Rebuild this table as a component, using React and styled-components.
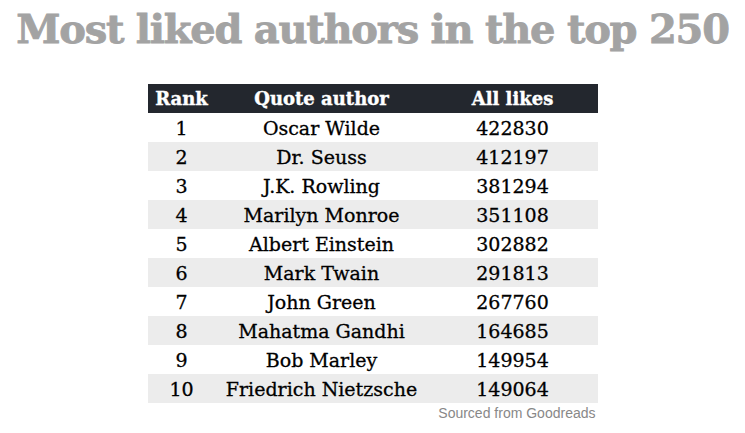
import React from "react";
import styled, { createGlobalStyle } from "styled-components";

const Global = createGlobalStyle`
  html, body { margin: 0; padding: 0; background: #ffffff; }
  body { width: 745px; height: 433px; overflow: hidden; }
`;

const Page = styled.div`
  display: flex;
  flex-direction: column;
  align-items: center;
  padding-top: 5px;
`;

const Title = styled.h1`
  margin: 0;
  font-family: "DejaVu Serif", serif;
  font-weight: bold;
  font-size: 40px;
  line-height: 48px;
  color: #a3a3a3;
  -webkit-text-stroke: 0.8px #a3a3a3;
  white-space: nowrap;
  letter-spacing: -1.25px;
`;

const TableBox = styled.div`
  width: 450px;
  margin-top: 31px;
  display: flex;
  flex-direction: column;
`;

const Row = styled.div`
  display: grid;
  grid-template-columns: 68px 212px 170px;
  height: 29px;
  align-items: center;
  text-align: center;
  font-family: "DejaVu Serif", serif;
  font-size: ${(p) => (p.$head ? "18px" : "19px")};
  background: ${(p) => (p.$head ? "#23272e" : p.$alt ? "#ececec" : "#ffffff")};
  color: ${(p) => (p.$head ? "#ffffff" : "#000000")};
  font-weight: ${(p) => (p.$head ? "bold" : "normal")};
  -webkit-text-stroke: ${(p) => (p.$head ? "0.4px #ffffff" : "0.3px #000000")};
`;

const Cell = styled.span`
  white-space: nowrap;
`;

const Source = styled.div`
  align-self: flex-end;
  margin-top: 2px;
  margin-right: 2px;
  font-family: "Liberation Sans", Arial, sans-serif;
  font-size: 14px;
  line-height: 16px;
  color: #888888;
`;

const data = [
  ["1", "Oscar Wilde", "422830"],
  ["2", "Dr. Seuss", "412197"],
  ["3", "J.K. Rowling", "381294"],
  ["4", "Marilyn Monroe", "351108"],
  ["5", "Albert Einstein", "302882"],
  ["6", "Mark Twain", "291813"],
  ["7", "John Green", "267760"],
  ["8", "Mahatma Gandhi", "164685"],
  ["9", "Bob Marley", "149954"],
  ["10", "Friedrich Nietzsche", "149064"],
];

export default function App() {
  return (
    <>
      <Global />
      <Page>
        <Title>Most liked authors in the top 250</Title>
        <TableBox>
          <Row $head>
            <Cell>Rank</Cell>
            <Cell>Quote author</Cell>
            <Cell>All likes</Cell>
          </Row>
          {data.map((d, i) => (
            <Row key={d[0]} $alt={i % 2 === 1}>
              <Cell>{d[0]}</Cell>
              <Cell>{d[1]}</Cell>
              <Cell>{d[2]}</Cell>
            </Row>
          ))}
          <Source>Sourced from Goodreads</Source>
        </TableBox>
      </Page>
    </>
  );
}
